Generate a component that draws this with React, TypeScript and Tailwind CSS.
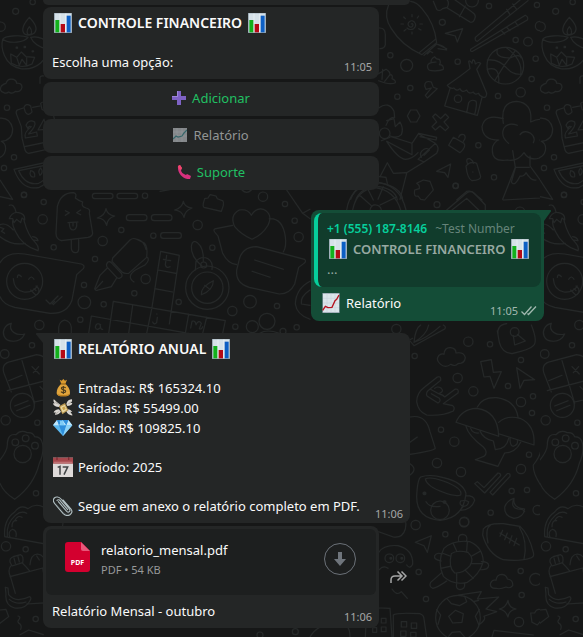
import type { ReactNode } from "react";

function Doodles() {
  return (
    <svg className="absolute inset-0 h-full w-full" aria-hidden="true">
      <defs>
        <g id="doodle-tile" fill="none" stroke="#252828" strokeWidth="3.4" strokeLinecap="round" strokeLinejoin="round">
          {/* lamp, calendar and fruit along the left edge */}
          <g transform="scale(.33333)">
            <path d="M88 52C70 72 62 92 74 102Q88 110 102 100C116 86 104 68 88 52ZM88 80C78 92 80 104 88 104S98 92 88 80Z" />
            <path d="M8 118C2 140 10 196 62 206C108 212 148 180 146 130C132 116 112 108 92 112C98 128 120 144 140 146M8 118C14 106 66 104 84 112C74 126 30 134 8 118Z" />
            <path d="M34 190L32 162L50 172L64 156L78 170L104 172L96 192Q64 208 34 190ZM50 172L58 196L66 178L80 196L80 172" />
            <path d="M50 143h1M74 141h1M98 154h1" strokeWidth="7" />
            <path d="M12 278Q-4 274 4 258Q12 250 18 250Q22 234 40 238Q50 242 50 250Q66 248 66 262Q62 278 46 274Q36 284 26 276Q18 282 12 278Z" />
            <path d="M52 330L70 324M98 322L120 318M142 314Q156 316 158 330L176 430Q174 440 160 444L86 460Q76 458 74 446L66 414L64 380L50 344Q46 334 52 330M74 440L160 422" />
            <path d="M72 322Q78 308 92 318L96 336Q84 350 76 336ZM122 310Q130 302 140 310L144 326Q136 336 126 328Z" />
            <path d="M78 376Q86 356 104 366Q110 376 86 402L110 396L112 408L76 414Q70 398 94 380Q86 376 84 386ZM132 358L114 390L136 388L138 404M132 358L140 386" />
            <path d="M42 508L152 484Q164 540 118 562Q66 574 42 508ZM56 512L146 494Q150 534 116 550Q76 558 56 512ZM92 512Q106 514 104 530Q92 534 90 520ZM122 504Q132 516 120 526Q112 514 122 504Z" />
            <path d="M-4 355Q30 350 38 386Q38 420 4 424Q20 432 16 452Q12 470 -6 474M0 540L38 598L0 590M120 250V232Q122 226 132 228" />
            <circle cx="47" cy="34" r="9" /><circle cx="98" cy="6" r="8" /><circle cx="2" cy="80" r="14" /><circle cx="21" cy="323" r="8" /><circle cx="42" cy="472" r="8" /><circle cx="12" cy="504" r="8" /><circle cx="72" cy="584" r="8" />
          </g>
          {/* upper right field */}
          <g transform="translate(290 0) scale(.33333)">
            <path d="M296 14Q280 50 304 86Q336 138 396 164L440 128Q434 70 396 26Q380 6 362 4M388 158L436 118M402 166L440 132L470 146M440 132Q462 136 470 150L444 146M412 162L420 154L428 158" />
            <path d="M364 72q4-3 5 2q-1 9-9 7q-9-6-4-14q8-9 17-1q9 11-2 20q-12 6-20-2M366 50v-6M382 54l4-6M390 72h7M386 86l7 4M366 96v6M348 88l-6 5M340 72h-7M346 56l-5-5" />
            <path d="M430 4L440 28Q448 36 458 26L472 22Q480 6 468 -4M472 24L540 66Q552 70 556 50Q556 42 546 36L490 -4M508 50L526 18" />
            <path d="M466 100L518 86L502 126L496 108ZM556 112L690 0M562 124L714 2M556 112Q554 124 562 124M650 28L660 44M668 12L680 28M542 148L706 46Q716 50 712 60L548 154Q540 156 542 148M634 92L644 102M650 82L660 92M676 66L684 78" />
            <circle cx="646" cy="197" r="55" />
            <path d="M622 148Q614 174 660 174Q690 160 694 174M592 180Q628 176 652 206Q670 226 696 222M592 208Q630 196 626 248M614 242Q640 196 676 152M648 142Q700 180 692 224" />
            <path d="M414 206Q408 192 424 188Q420 178 434 170Q438 178 448 178Q454 188 448 194Q462 194 460 208Q450 214 424 212Q416 212 414 206M424 188L438 186" />
            <path d="M472 256Q510 230 540 206L536 184Q540 180 546 190L548 180Q554 178 556 192Q566 184 572 190L560 208L590 280Q590 294 580 292Q568 288 566 280Q554 286 550 276Q536 284 530 270Q516 280 510 266Q500 276 492 264Q480 268 472 256M480 266L464 318L562 346L576 292M530 338L536 308Q544 296 558 304Q562 312 554 344" /><circle cx="504" cy="296" r="11" />
            <path d="M404 258Q404 240 424 246L430 262L442 266L412 294L406 286L424 264L408 268ZM264 222L288 208Q300 214 300 224Q310 224 306 236Q318 240 316 248Q300 256 266 242M278 208L276 238M300 224L284 244M362 330L380 330L390 348L380 366L362 366L352 348Z" />
            <path d="M428 350L436 342L452 356L466 342L476 352L462 366L476 382L466 392L450 378L436 390L426 380L440 366Z" />
            <path d="M758 272Q746 264 756 252Q766 248 772 250Q776 234 792 238Q800 244 800 250Q818 250 818 264Q814 276 798 272Q786 284 776 276Q766 280 758 272" />
            <path d="M640 370Q630 306 680 304Q728 308 722 366Q774 342 788 388Q786 424 750 420Q774 450 748 474Q718 484 702 458Q682 486 652 480Q600 488 608 440Q614 424 626 420Q578 420 576 380Q584 340 640 356M656 430Q630 410 642 384Q656 366 682 376M690 404Q702 388 722 400Q738 412 730 428M668 452L676 502L638 598M720 468V498L788 592L640 600M676 502H718M676 504L664 546Q674 562 690 528Q702 530 708 518Q724 544 738 540" />
            <path d="M266 324Q296 302 312 334L314 352Q298 350 288 376M290 362L312 356L316 380L330 366Q342 386 334 404Q322 416 300 408M300 412L274 422M304 410L366 430L386 400L440 412L438 420L390 410M386 402L436 430Q450 442 440 460L402 486L384 478L436 430M366 430V464L290 424Q322 474 346 478Q366 478 384 458M402 486L350 518L310 520L292 488L270 530M350 520L330 598M268 530L288 532L292 550" /><circle cx="284" cy="400" r="16" />
            <path d="M394 472Q386 458 402 448Q412 442 418 450L402 466M476 436L490 412L522 430Q530 440 510 458ZM506 412Q510 400 522 404Q530 412 520 424M528 498Q542 482 560 490L572 530Q572 540 546 542Q532 536 528 498M532 490Q526 474 540 476Q550 482 550 490M548 516h1M440 514L482 492L474 532L464 518ZM374 570L388 566Q390 556 380 550L400 540L420 544L430 570L404 600L392 598L384 588Q370 592 374 570" />
            <path d="M182 598Q200 544 268 548Q334 560 338 600M198 598Q214 560 268 560Q316 568 322 600M230 560L250 600M280 560L264 598M500 600L530 574Q544 570 552 580L576 600M266 84Q286 82 286 104L286 134Q284 146 270 146" />
            <circle cx="350" cy="196" r="18" /><circle cx="457" cy="67" r="9" /><circle cx="301" cy="166" r="8" /><circle cx="503" cy="185" r="8" /><circle cx="597" cy="18" r="8" /><circle cx="546" cy="2" r="19" /><circle cx="741" cy="15" r="8" /><circle cx="796" cy="34" r="8" /><circle cx="750" cy="78" r="14" /><circle cx="677" cy="120" r="8" /><circle cx="714" cy="125" r="13" /><circle cx="737" cy="176" r="8" /><circle cx="725" cy="237" r="8" /><circle cx="692" cy="277" r="14" /><circle cx="624" cy="288" r="8" /><circle cx="361" cy="264" r="8" /><circle cx="322" cy="290" r="8" /><circle cx="770" cy="323" r="8" /><circle cx="565" cy="436" r="8" /><circle cx="612" cy="532" r="8" /><circle cx="497" cy="557" r="8" /><circle cx="762" cy="504" r="8" /><circle cx="792" cy="472" r="8" />
          </g>
          {/* middle band */}
          <g transform="translate(0 190) scale(.33333)">
            <path d="M168 130L172 50Q182 8 220 8Q232 10 226 24Q236 32 248 36Q242 50 258 54Q272 56 268 70L278 130Q276 140 264 142L184 152Q168 148 168 130M214 150V176Q216 188 226 188T236 176V148M196 62L208 68L196 76M242 60L230 68L242 74M204 98L234 96M208 98Q208 120 220 120Q232 118 230 98M219 98V108" />
            <rect x="277" y="10" width="62" height="16" rx="8" /><rect x="351" y="10" width="62" height="16" rx="8" /><rect x="379" y="74" width="62" height="18" rx="9" /><rect x="454" y="74" width="62" height="18" rx="9" /><rect x="482" y="128" width="62" height="17" rx="8" />
            <path d="M318 56Q322 76 344 78Q322 84 320 106Q314 84 292 84Q314 78 318 56M550 34Q554 52 576 54Q554 62 552 82Q546 62 524 60Q546 54 550 34" />
            <path d="M28 46Q42 40 48 66M28 86Q36 64 56 68Q76 72 74 90L66 84L62 98L50 88L42 98L38 86ZM72 92Q84 138 108 160Q118 172 114 182Q66 168 46 124Q36 104 38 92M40 120Q18 96 0 104M0 140Q36 168 76 160M98 140Q112 142 114 152L100 150M0 112L12 116L4 124L14 130" />
            <path d="M0 218Q20 184 74 192L244 222Q256 226 250 236L230 254L216 330Q202 372 150 370L44 352Q10 344 0 320" /><circle cx="74" cy="274" r="54" />
            <path d="M52 262Q54 248 64 260M86 268Q94 254 102 268M40 266Q42 300 72 306Q100 308 112 288M92 300L106 314Q120 314 116 296L108 288M102 296L108 302M138 330L150 342L174 318M156 342L164 334M160 344L186 320" />
            <path d="M338 204L390 150Q400 142 410 148L434 160Q444 170 440 202L386 250Q374 252 366 246L336 214ZM412 148Q432 152 438 178M440 200Q452 208 436 224L406 240Q378 260 402 276M324 216Q330 212 336 220L364 250Q370 260 360 264Q354 268 348 260L322 232Q316 224 324 216M322 234L300 256L284 296Q286 304 294 300L334 290L350 264M286 298L308 274" />
            <path d="M482 184L538 196L508 402M482 184L456 352M474 240L528 250M464 296L518 306M340 334L676 392L668 430M340 334L326 430M274 378L566 430M274 378L266 430M398 346L386 430M456 352L440 430M566 372L556 430M620 382L608 430M500 196L496 224Q498 236 510 230M490 208L512 212M470 372h1M472 382L470 398Q462 406 458 396M302 404Q288 396 286 412Q290 424 302 412L300 404Q302 420 308 418M572 414L576 394Q586 390 588 404Q596 388 604 400L598 416Q604 420 608 410" />
            <circle cx="622" cy="293" r="65" /><circle cx="622" cy="293" r="47" />
            <path d="M586 240L588 214Q604 196 624 206Q640 216 636 238M604 314Q602 290 640 272Q640 300 604 314M614 286L630 298M606 228Q572 200 574 168Q578 148 592 158Q612 174 610 214" /><circle cx="611" cy="225" r="9" />
            <path d="M614 26L624 24L630 14L648 18L652 26L668 32Q672 36 670 46L664 64L612 52Q608 48 610 40ZM754 76Q768 52 790 58Q820 72 804 106Q786 136 756 148Q724 134 704 110Q688 76 718 60Q744 56 754 76M698 106L648 116Q638 118 644 126L654 138L668 190Q684 222 710 224M808 86Q848 84 856 140Q860 170 850 186" />
            <path d="M716 216Q724 170 770 170L914 208Q920 214 912 220L896 232L884 282Q870 312 838 312L748 292Q706 280 710 240ZM764 210L850 238M756 244L810 262M860 0L908 70L930 58M908 70L930 86M930 274Q888 296 886 342Q890 374 930 388M930 300Q900 320 904 342L930 346M176 430V412Q178 394 194 390Q212 394 214 412V430M480 4L536 -6M726 0Q740 14 754 0M780 430Q800 416 838 430" />
            <circle cx="72" cy="15" r="8" /><circle cx="131" cy="36" r="8" /><circle cx="128" cy="88" r="14" /><circle cx="161" cy="172" r="8" /><circle cx="435" cy="17" r="8" /><circle cx="364" cy="120" r="8" /><circle cx="308" cy="153" r="14" /><circle cx="285" cy="207" r="8" /><circle cx="460" cy="137" r="8" /><circle cx="437" cy="267" r="14" /><circle cx="403" cy="310" r="8" /><circle cx="253" cy="337" r="19" /><circle cx="252" cy="285" r="8" /><circle cx="311" cy="343" r="8" /><circle cx="118" cy="405" r="14" /><circle cx="241" cy="389" r="8" /><circle cx="593" cy="105" r="14" /><circle cx="637" cy="173" r="8" /><circle cx="789" cy="20" r="14" /><circle cx="855" cy="42" r="8" /><circle cx="884" cy="92" r="8" /><circle cx="896" cy="141" r="14" /><circle cx="536" cy="336" r="8" /><circle cx="697" cy="363" r="14" /><circle cx="750" cy="335" r="19" /><circle cx="831" cy="348" r="8" /><circle cx="801" cy="394" r="24" /><circle cx="757" cy="410" r="18" /><circle cx="706" cy="410" r="8" /><circle cx="849" cy="424" r="9" /><circle cx="890" cy="412" r="8" />
          </g>
          {/* above the reply */}
          <g transform="translate(300 175) scale(.33333)">
            <path d="M140 105Q150 34 226 22Q300 26 318 105M158 105Q170 44 226 38Q284 46 302 105M178 60L214 92M240 90L290 66M440 105L500 54Q512 46 522 54L556 90V105M456 105L500 70L536 105M210 105Q214 88 228 90Q242 92 244 105" />
            <circle cx="467" cy="33" r="8" /><circle cx="411" cy="89" r="9" /><circle cx="660" cy="110" r="14" /><circle cx="790" cy="60" r="8" />
          </g>
          {/* lower right field */}
          <g transform="translate(230 325) scale(.33333)">
            <path d="M540 48L552 62L644 12Q650 6 640 0M552 52Q556 10 572 0M552 52Q590 30 596 0M552 52Q590 40 630 4M540 44L548 40M804 30Q800 0 830 -4M904 0Q924 50 910 62Q900 74 846 86Q816 84 808 52L802 18M850 32L854 60L886 48L862 28" /><circle cx="854" cy="21" r="13" />
            <path d="M632 118Q616 106 626 92Q634 84 642 88Q644 66 662 68Q678 70 678 84Q702 80 706 98Q704 116 684 116Q676 126 662 118Q646 130 632 118M752 110L784 104L790 142L814 140L792 190L780 154L762 156ZM860 128L914 164L882 166L870 190Z" />
            <path d="M560 230Q560 204 584 186L622 156Q634 152 632 166L600 192L626 206Q640 210 644 216L676 192Q688 192 684 204L640 236L668 242Q676 248 670 258Q636 274 590 270Q564 260 560 230M600 192Q584 204 592 214L624 234Q634 228 628 220L604 206M614 190Q622 182 634 190Q644 200 626 206" />
            <path d="M742 246Q756 216 800 218Q856 226 864 276M678 292Q694 252 740 250Q804 258 806 334ZM806 292Q830 270 870 280Q916 300 912 360L806 326M708 304Q714 330 760 366Q776 382 762 394L736 404L804 424L824 384Q856 384 872 352M750 318Q760 342 790 348L796 374Q830 372 836 340M722 310Q728 326 746 324M840 340Q840 364 850 364Q866 358 862 346" />
            <path d="M540 276Q588 266 600 320L616 370Q612 378 540 388M540 352L562 336M540 416Q564 432 540 450" />
            <path d="M586 462Q600 454 640 468Q700 490 692 510Q676 516 640 502Q590 484 586 462M572 456Q600 446 640 458Q700 472 708 506Q700 580 630 586Q560 580 560 516Q562 464 572 456M708 512Q732 512 734 526Q724 556 690 556L700 544Q686 540 692 528Q704 524 716 530Q714 544 700 544M588 530Q598 548 630 544" /><path d="M583 505h1M643 531h1" strokeWidth="11" />
            <path d="M734 476L742 470L762 488L804 444Q812 444 812 452L764 504ZM780 502L832 446Q842 444 840 454L788 510ZM852 520Q840 548 864 552Q880 552 884 560M852 522Q848 548 884 552Q880 578 852 580Q822 574 824 546Q830 528 852 520" />
            <path d="M934 160Q932 130 956 122V216L934 160M910 420Q932 392 932 376V480Q908 444 910 420" />
            <circle cx="715" cy="50" r="14" /><circle cx="780" cy="58" r="8" /><circle cx="554" cy="93" r="8" /><circle cx="683" cy="159" r="14" /><circle cx="730" cy="199" r="14" /><circle cx="834" cy="183" r="8" /><circle cx="873" cy="105" r="8" /><circle cx="873" cy="231" r="14" /><circle cx="909" cy="214" r="8" /><circle cx="906" cy="264" r="8" /><circle cx="633" cy="314" r="8" /><circle cx="673" cy="350" r="14" /><circle cx="897" cy="389" r="8" /><circle cx="873" cy="432" r="14" /><circle cx="621" cy="414" r="14" /><circle cx="693" cy="441" r="14" /><circle cx="845" cy="498" r="8" /><circle cx="891" cy="495" r="8" /><circle cx="923" cy="555" r="14" /><circle cx="782" cy="563" r="8" /><circle cx="702" cy="592" r="14" /><circle cx="499" cy="12" r="14" />
          </g>
          {/* lower left strip */}
          <g transform="translate(0 320) scale(.33333)">
            <path d="M12 160Q2 130 34 124L110 104Q140 108 146 130L168 206Q166 230 130 240L104 246M12 160L34 216M66 122L104 250M22 212L160 176M26 182L66 166M96 140L118 162M100 158L116 140M120 200L132 212" /><circle cx="67" cy="256" r="36" /><path d="M44 258L84 242M50 272L90 256" />
            <path d="M0 420Q24 390 22 370Q24 340 48 344Q62 328 82 338Q98 336 104 350Q124 350 128 372Q132 400 118 430Q102 496 44 538Q10 516 0 490" /><circle cx="68" cy="402" r="26" /><circle cx="46" cy="367" r="10" /><circle cx="77" cy="355" r="10" /><circle cx="105" cy="377" r="10" />
            <path d="M14 650Q10 600 44 576Q62 552 84 566Q106 548 132 562L190 600L180 680ZM22 648Q18 610 46 586Q64 570 80 580M30 652Q22 634 38 628Q52 632 48 650M36 620Q36 600 50 602M44 602Q54 584 66 592" />
            <path d="M30 726Q28 714 40 710L62 704Q72 708 68 728L36 738ZM42 714L46 730M54 710L58 726M32 738Q22 752 32 772L46 820M66 728Q80 742 88 752M30 770L128 744L146 848L80 852M90 734Q92 704 112 702Q136 704 140 740M110 708L118 720" />
            <path d="M16 802L24 804L26 824Q46 850 88 830Q96 832 90 842Q76 868 44 864Q14 856 18 822ZM28 838Q50 856 78 846M0 870L18 868L26 890L0 910M54 888Q64 890 56 900Q50 906 60 912Q66 918 62 928M60 944L86 930L130 944" />
            <path d="M34 10C14 14 6 34 12 48C20 68 60 72 74 42C50 48 24 34 34 10Z" />
            <circle cx="14" cy="102" r="13" /><circle cx="96" cy="76" r="8" /><circle cx="17" cy="301" r="14" /><circle cx="112" cy="308" r="8" /><circle cx="108" cy="520" r="8" /><circle cx="18" cy="679" r="14" /><circle cx="77" cy="688" r="8" /><circle cx="107" cy="897" r="8" />
          </g>
          {/* bottom right field */}
          <g transform="translate(240 515) scale(.33333)">
            <path d="M416 22L480 0Q504 12 496 42Q488 70 460 66L416 50M526 82L574 62L562 112L552 92ZM416 112Q432 88 474 92Q520 104 518 148Q510 164 500 150M418 164Q430 150 444 160M456 222Q470 244 484 230L502 250" /><circle cx="448" cy="130" r="13" /><circle cx="481" cy="130" r="13" /><path d="M452 130h1M485 130h1" strokeWidth="8" />
            <path d="M612 100Q640 74 690 80Q728 96 730 140Q718 180 682 202Q640 212 610 184Q590 140 612 100M634 116Q650 104 684 112Q704 130 690 152Q670 176 644 174Q624 158 634 116M640 86L650 108M682 80L680 108M722 108L694 124M728 146L694 146M700 190L676 166M650 206L650 174M602 160L630 154M606 114L632 124M656 80Q652 58 668 58Q684 60 680 78M604 138Q580 134 584 122Q592 110 606 118M724 140Q746 140 746 152Q744 166 720 164M606 172L572 202Q566 214 578 220Q592 218 620 198M650 206Q646 222 660 224Q676 222 674 206" />
            <path d="M730 42Q742 24 790 26L840 34Q866 56 880 112Q884 124 874 128Q840 140 790 134Q744 118 728 60ZM752 30Q734 40 744 84M838 36Q864 80 852 134M780 54L838 90M788 46L780 64M802 54L794 74M816 62L808 84M830 70L822 92" />
            <path d="M768 220Q748 220 752 204Q758 192 768 196Q770 178 786 178Q800 180 802 192Q820 194 818 212Q810 222 798 216Q780 224 768 220M804 256Q806 278 828 282Q806 286 804 306Q798 286 778 282Q798 278 804 256M872 294L884 294Q890 280 902 284L908 292L924 294L920 322L902 318L892 330L876 322Z" />
            <circle cx="654" cy="308" r="67" /><path d="M646 286L670 296L666 322L638 324L626 304ZM622 252L634 266L658 272L680 260L674 244M590 284L602 300L594 328M718 284L706 304L716 328M626 364L636 352L660 350L674 366M656 240L724 230L712 252L776 246L738 282L770 290L732 304Q740 314 716 330M700 260L716 256M756 366L762 346L880 360" />
            <path d="M376 366L380 288Q390 276 450 280L456 366M460 366V300Q470 292 540 296Q552 300 552 312L560 366M424 310h14v14h-14ZM398 338h12v14h-12ZM424 336h14v14h-14ZM484 320h16v16h-16ZM514 324h16v16h-16ZM482 348h16v16h-16ZM512 352h16v14h-16ZM210 366Q230 330 290 320Q330 320 330 366" />
            <circle cx="527" cy="30" r="14" /><circle cx="616" cy="58" r="8" /><circle cx="673" cy="20" r="14" /><circle cx="600" cy="-14" r="28" /><circle cx="536" cy="171" r="8" /><circle cx="558" cy="252" r="8" /><circle cx="842" cy="168" r="8" /><circle cx="887" cy="193" r="18" /><circle cx="845" cy="240" r="8" /><circle cx="837" cy="321" r="14" /><circle cx="60" cy="360" r="9" /><circle cx="166" cy="350" r="9" />
          </g>
        </g>
        <pattern id="doodle-wall" width="540" height="637" patternUnits="userSpaceOnUse">
          <use href="#doodle-tile" />
        </pattern>
      </defs>
      <rect width="100%" height="100%" fill="url(#doodle-wall)" />
    </svg>
  );
}

function Emoji({ label, children }: { label: string; children: ReactNode }) {
  return (
    <svg viewBox="0 0 60 60" className="mx-px size-5 shrink-0" role="img" aria-label={label}>
      {children}
    </svg>
  );
}

function BarChart() {
  return (
    <Emoji label="Gráfico de barras">
      <path fill="#8797a2" d="M3 0h54v60H3z" />
      <path fill="#d6e2e9" d="M5 1h50v57H5z" />
      <path fill="#e3ecf1" d="M19 2h4v56h-4zM36 2h5v56h-5z" />
      <path fill="#13b01c" d="M7 21h12v37H7z" />
      <path fill="#b50a16" d="M23 33h13v25H23z" />
      <path fill="#0d5fc4" d="M41 8h12v50H41z" />
    </Emoji>
  );
}

function LineChart() {
  return (
    <Emoji label="Gráfico em alta">
      <path fill="#8797a2" d="M4 0h52v60H4z" />
      <path fill="#dbe5ea" d="M6 2h48v56H6z" />
      <path stroke="#c9d5dc" strokeWidth="2" d="M6 16h48M6 30h48M6 44h48M18 2v56M30 2v56M42 2v56" />
      <path fill="none" stroke="#b5121f" strokeWidth="4" d="M5 52l8-12 8 4 12-1 9-20 5-4 7-13" />
    </Emoji>
  );
}

function MoneyBag() {
  return (
    <Emoji label="Saco de dinheiro">
      <path fill="#d99a2e" d="M20 5l6 3 5-5 5 5 6-3-5 13H25z" />
      <path fill="#e0a43c" d="M24 18h14c8 7 13 17 13 26 0 8-6 11-20 11S11 52 11 44c0-9 5-19 13-26z" />
      <path fill="#b97d1d" d="M12 47c6 5 32 5 38 0-2 6-8 8-19 8s-17-2-19-8z" />
      <path stroke="#8b5d14" strokeWidth="3" d="M23 18h16" />
      <path fill="none" stroke="#4b3b1c" strokeWidth="3.5" d="M38 30c-3-4-13-4-13 1 0 6 13 3 13 9 0 6-11 5-14 1M31 24v24" />
    </Emoji>
  );
}

function WingedMoney() {
  return (
    <Emoji label="Dinheiro voando">
      <path fill="#dad7d2" d="M22 20C12 14 6 6 2 4c-2 7 1 10 4 12-4 0-5 0-6 1 2 6 8 9 18 10zM40 18C42 8 50 4 57 4c1 6-1 9-4 11h5c-1 7-8 9-15 9zM18 34C10 34 3 38 2 44l6-1-2 7c7 1 13-3 18-9zM40 34c8-2 14 2 18 8l-6-1 7 11c-8 1-16-4-19-12z" />
      <path fill="#aaa69e" d="M6 10l16 12-14-6zM54 10L42 20l12-5zM8 46l14-9-12 11zM56 48L42 38l10 6z" />
      <path fill="#b9974f" d="M18 25l18-10 10 22-18 12z" />
      <path fill="#e9d7a0" d="M22 27l13-7 7 15-13 9z" />
      <path fill="#caa14a" d="M27 29l7-4 4 8-7 4z" />
    </Emoji>
  );
}

function Gem() {
  return (
    <Emoji label="Diamante">
      <path fill="#5bb8ef" d="M12 6h34l12 16-28 32L0 22z" />
      <path fill="#bfe6fb" d="M12 6l6 16H0zM46 6L40 22h18zM18 22h22L29 6z" />
      <path fill="#2f8fdc" d="M29 6l11 16 6-16zM29 6L18 22 12 6zM18 22l12 32 10-32z" />
      <path fill="#7fcdf7" d="M20 8l9 0 6 14H22z" />
      <path fill="#8dd3f8" d="M40 22h18L30 54z" />
    </Emoji>
  );
}

function Calendar() {
  return (
    <Emoji label="Calendário">
      <path fill="#dedad9" d="M0 2h60v58H0z" />
      <path fill="#a6474c" d="M0 2h60v18H0z" />
      <path fill="#7b2f35" d="M10 0h4v9h-4zM45 0h4v9h-4z" />
      <path fill="#bf7073" d="M2 14h56v4H2z" />
      <path fill="none" stroke="#414446" strokeWidth="4.5" d="M14 31l7-3v25M29 30h15L33 53" />
    </Emoji>
  );
}

function Paperclip() {
  return (
    <Emoji label="Clipe">
      <path
        fill="none"
        stroke="#b1bfc2"
        strokeWidth="3.4"
        strokeLinecap="round"
        d="M16 17l25 29c6 6 13-1 8-7L24 9C18 2 9 1 4 6s-3 12 2 18l24 28c7 7 15 8 21 4s8-10 3-17L30 12M12 13c4-4 8-1 11 3l21 25"
      />
      <path fill="none" stroke="#5f6c70" strokeWidth="1.5" d="M7 21l25 29c6 5 12 7 17 3" />
    </Emoji>
  );
}

function Time({ value, className }: { value: string; className: string }) {
  return <time className={`shrink-0 text-[11px] leading-4 ${className}`}>{value}</time>;
}

function Line({ icon, children }: { icon: ReactNode; children: ReactNode }) {
  return (
    <p className="flex h-5 items-center gap-1 whitespace-nowrap">
      {icon}
      <span>{children}</span>
    </p>
  );
}

function Title({ className, children }: { className: string; children: ReactNode }) {
  return (
    <p className={`flex h-5 items-center gap-1 leading-5 whitespace-nowrap ${className}`}>
      <BarChart />
      <span>{children}</span>
      <BarChart />
    </p>
  );
}

export default function App() {
  return (
    <main className="relative min-h-screen overflow-hidden bg-[#161717] font-['Noto_Sans','Open_Sans',sans-serif] text-[13px] leading-5 text-[#fafafa]">
      <Doodles />
      <div className="relative flex flex-col pr-[39px] pb-[9px] pl-[43px]">
        <div className="h-[5px] w-[367px] max-w-full rounded-b-lg bg-[#242626]" />

        <section className="mt-0.5 flex w-[336px] max-w-full flex-col gap-[3px]">
          <article className="rounded-lg bg-[#242626] pt-1.5 pr-[7px] pb-[7px] pl-[9px]">
            <Title className="text-sm font-semibold">CONTROLE FINANCEIRO</Title>
            <div className="mt-[19px] flex items-end justify-between">
              <p>Escolha uma opção:</p>
              <Time value="11:05" className="-mb-[3px] text-[#a5a6a6]" />
            </div>
          </article>
          <button type="button" className="flex h-[34px] items-center justify-center gap-1.5 rounded-lg bg-[#242626] pb-0.5 text-[#21c063]">
            <svg viewBox="0 0 14 14" className="size-3.5" aria-hidden="true">
              <path fill="#7e62c4" d="M5 0h4v5h5v4H9v5H5V9H0V5h5z" />
              <path fill="#9d84dc" d="M5 0h1v6H0V5h5z" />
            </svg>
            Adicionar
          </button>
          <button type="button" disabled className="flex h-[34px] items-center justify-center gap-1.5 rounded-lg bg-[#242626] pb-0.5 text-[#929595]">
            <svg viewBox="0 0 14 14" className="size-3.5" aria-hidden="true">
              <path fill="#85888b" d="M0 0h14v14H0z" />
              <path stroke="#969a9d" strokeWidth=".6" d="M0 4h14M0 8h14M4 0v14M9 0v14" />
              <path fill="none" stroke="#35666a" strokeWidth="1.2" d="M0 11l3-3 2 1 4-1 2-3 3-3" />
            </svg>
            Relatório
          </button>
          <button type="button" className="flex h-[34px] items-center justify-center gap-1.5 rounded-lg bg-[#242626] pb-0.5 text-[#21c063]">
            <svg viewBox="0 0 14 14" className="size-3.5" aria-hidden="true">
              <path fill="#d8307e" d="M1 1l2-1 2 3-1 2c0 2 2 4 5 5l1-1 4 2-1 3c-6 1-13-5-12-13z" />
              <path fill="#f0476a" d="M1 1l2-1 2 3-1 2-2-1z" />
            </svg>
            Suporte
          </button>
        </section>

        <article className="relative mt-5 w-[233px] self-end rounded-lg rounded-tr-none bg-[#144d37] p-[3px] pb-2">
          <svg viewBox="0 0 7 11" className="absolute top-0 -right-[7px] h-[11px] w-[7px]" aria-hidden="true">
            <path fill="#144d37" d="M0 0h6q2 0 .5 2L0 11z" />
          </svg>
          <blockquote className="overflow-hidden rounded-lg border-l-4 border-[#06cf9c] bg-[#113c2c] pt-1.5 pb-2 pl-[9px] text-[#98a9a2]">
            <p className="flex gap-2 text-[12px] whitespace-nowrap">
              <b className="font-semibold text-[#06cf9c]">+1 (555) 187-8146</b>
              <span className="text-[#66847a]">~Test Number</span>
            </p>
            <Title className="text-[13px] font-semibold">CONTROLE FINANCEIRO</Title>
            <p>...</p>
          </blockquote>
          <div className="mt-1.5 flex items-end justify-between pr-1 pl-1.5">
            <Line icon={<LineChart />}>Relatório</Line>
            <span className="-mb-1.5 flex items-center gap-[3px]">
              <Time value="11:05" className="text-[#a1b8af]" />
              <svg viewBox="0 0 16 10" className="h-2.5 w-4" fill="none" stroke="#a1b8af" strokeWidth="1.3" role="img" aria-label="Entregue">
                <path d="M.5 5.500l3 3 7-8M6.500 7.500l1 1 7.500-8" />
              </svg>
            </span>
          </div>
        </article>

        <article className="relative mt-3 w-[367px] max-w-full rounded-lg rounded-tl-none bg-[#242626] pt-1.5 pr-[7px] pb-[7px] pl-[9px]">
          <svg viewBox="0 0 7 10" className="absolute top-0 -left-[7px] h-2.5 w-[7px]" aria-hidden="true">
            <path fill="#242626" d="M7 0H1Q-1 0 .5 2L7 10z" />
          </svg>
          <Title className="text-sm font-semibold">RELATÓRIO ANUAL</Title>
          <div className="mt-[19px]">
            <Line icon={<MoneyBag />}>Entradas: R$ 165324.10</Line>
            <Line icon={<WingedMoney />}>Saídas: R$ 55499.00</Line>
            <Line icon={<Gem />}>Saldo: R$ 109825.10</Line>
          </div>
          <div className="mt-[19px]">
            <Line icon={<Calendar />}>Período: 2025</Line>
          </div>
          <div className="mt-[19px] flex items-end justify-between">
            <Line icon={<Paperclip />}>Segue em anexo o relatório completo em PDF.</Line>
            <Time value="11:06" className="-mb-1.5 text-[#a5a6a6]" />
          </div>
        </article>

        <div className="mt-[3px] flex items-center gap-[11px]">
          <article className="w-[336px] max-w-full rounded-lg bg-[#242626] p-[3px] pb-[7px]">
            <div className="flex h-[66px] items-start rounded-md bg-[#1d1f1f] pt-[13px] pr-5 pl-[19px]">
              <svg viewBox="0 0 25 30" className="h-[30px] w-[25px] shrink-0" role="img" aria-label="PDF">
                <path fill="#d3002f" d="M3 0h13l9 9v18q0 3-3 3H3q-3 0-3-3V3q0-3 3-3z" />
                <path fill="#e8577a" d="M16 0l9 9h-7q-2 0-2-2z" />
                <text x="12.500" y="23" textAnchor="middle" fill="#fff" fontSize="7" fontWeight="700">PDF</text>
              </svg>
              <div className="-mt-0.5 ml-[11px] flex-1">
                <p>relatorio_mensal.pdf</p>
                <p className="text-[11px] text-[#979999]">PDF • 54 KB</p>
              </div>
              <button type="button" aria-label="Baixar" className="mt-px flex size-8 items-center justify-center rounded-full border border-[#6b7178]">
                <svg viewBox="0 0 12 14" className="h-3.5 w-3" aria-hidden="true">
                  <path fill="#6f757c" d="M4 0h4v7h4l-6 7-6-7h4z" />
                </svg>
              </button>
            </div>
            <div className="mt-1.5 flex items-end justify-between pr-1 pl-1.5">
              <p>Relatório Mensal - outubro</p>
              <Time value="11:06" className="-mb-1 text-[#a5a6a6]" />
            </div>
          </article>
          <button type="button" aria-label="Encaminhar" className="text-[#a5a6a6]">
            <svg viewBox="0 0 17 12" className="h-3 w-[17px]" fill="none" stroke="currentColor" strokeWidth="1.5" aria-hidden="true">
              <path d="M1 12V9q0-4 4-4h6M7.500.500L12 5 7.500 9.500M11.500.500L16 5l-4.500 4.500" />
            </svg>
          </button>
        </div>
      </div>
    </main>
  );
}
